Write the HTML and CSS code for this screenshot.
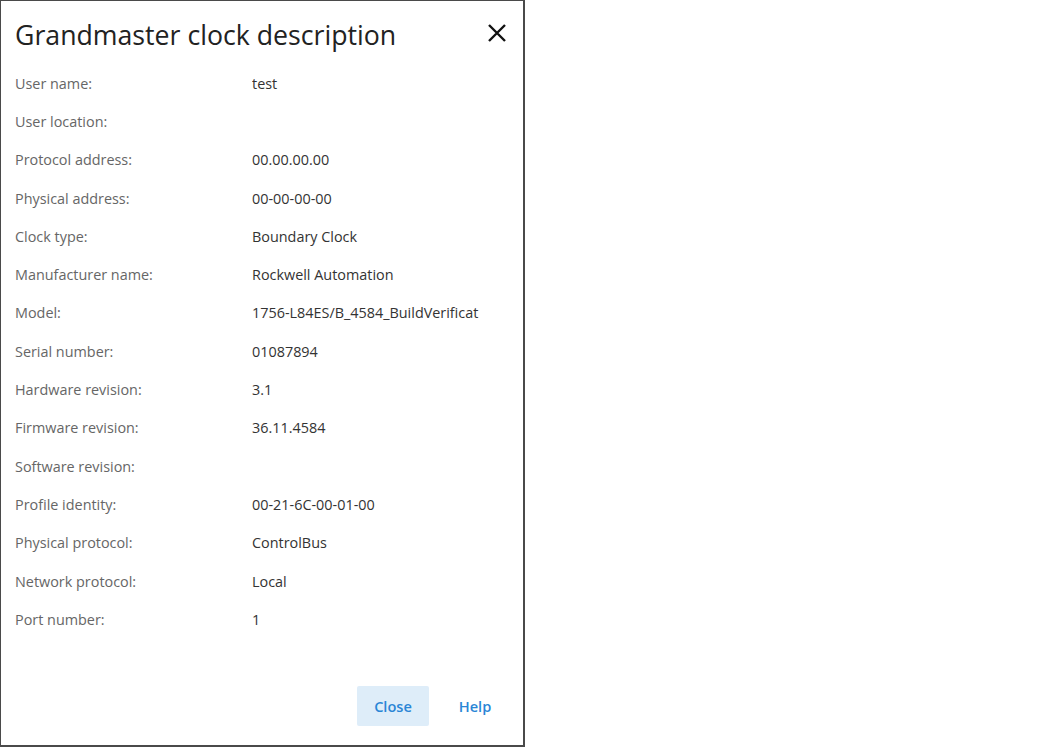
FILE: index.html
```html
<!DOCTYPE html>
<html lang="en">
<head>
    <meta charset="UTF-8" />
    <title>Grandmaster clock description</title>
    <link rel="stylesheet" href="styles.css">
</head>
<body>
    <div class="dialog">
        <div class="head">
            <h1>Grandmaster clock description</h1>
            <button class="close-x" title="Close">
                <svg width="20" height="20" viewBox="0 0 20 20"><path d="M2 2L18 18M18 2L2 18" stroke="#111" stroke-width="2.4" fill="none"/></svg>
            </button>
        </div>
        <dl class="info">
            <dt>User name:</dt><dd>test</dd>
            <dt>User location:</dt><dd></dd>
            <dt>Protocol address:</dt><dd>00.00.00.00</dd>
            <dt>Physical address:</dt><dd>00-00-00-00</dd>
            <dt>Clock type:</dt><dd>Boundary Clock</dd>
            <dt>Manufacturer name:</dt><dd>Rockwell Automation</dd>
            <dt>Model:</dt><dd>1756-L84ES/B_4584_BuildVerificat</dd>
            <dt>Serial number:</dt><dd>01087894</dd>
            <dt>Hardware revision:</dt><dd>3.1</dd>
            <dt>Firmware revision:</dt><dd>36.11.4584</dd>
            <dt>Software revision:</dt><dd></dd>
            <dt>Profile identity:</dt><dd>00-21-6C-00-01-00</dd>
            <dt>Physical protocol:</dt><dd>ControlBus</dd>
            <dt>Network protocol:</dt><dd>Local</dd>
            <dt>Port number:</dt><dd>1</dd>
        </dl>
        <div class="foot">
            <button class="btn primary">Close</button>
            <button class="btn">Help</button>
        </div>
    </div>
</body>
</html>
```
FILE: styles.css
```css
*{margin:0;padding:0;box-sizing:border-box;}
body{background:#fff;font-family:"Open Sans","Noto Sans",sans-serif;}
.dialog{
    width:525px;
    height:747px;
    border:1px solid #4a4a4a;
    border-right-width:2px;
    border-bottom-width:2px;
    display:flex;
    flex-direction:column;
    background:#fff;
}
.head{
    display:flex;
    align-items:center;
    justify-content:space-between;
    height:63px;
    padding:4px 14px 0 14px;
}
.head h1{font-weight:400;font-size:26.7px;color:#222;letter-spacing:0;}
.close-x{border:0;background:none;width:24px;height:24px;display:flex;align-items:center;justify-content:center;margin-top:-4px;cursor:pointer;}
.info{
    display:grid;
    grid-template-columns:237px 1fr;
    grid-auto-rows:38.3px;
    padding:0 14px;
    font-size:14.4px;
}
.info dt,.info dd{display:flex;align-items:center;white-space:nowrap;overflow:hidden;}
.info dt{color:#666;}
.info dd{color:#333;}
.foot{
    margin-top:auto;
    display:flex;
    justify-content:flex-end;
    gap:10px;
    padding:0 12px 19px 0;
}
.btn{
    width:72px;
    height:40px;
    border:0;
    border-radius:2px;
    background:none;
    color:#2a86d6;
    font-family:inherit;
    font-size:14.6px;
    font-weight:600;
}
.btn.primary{background:#deedf9;}
```
